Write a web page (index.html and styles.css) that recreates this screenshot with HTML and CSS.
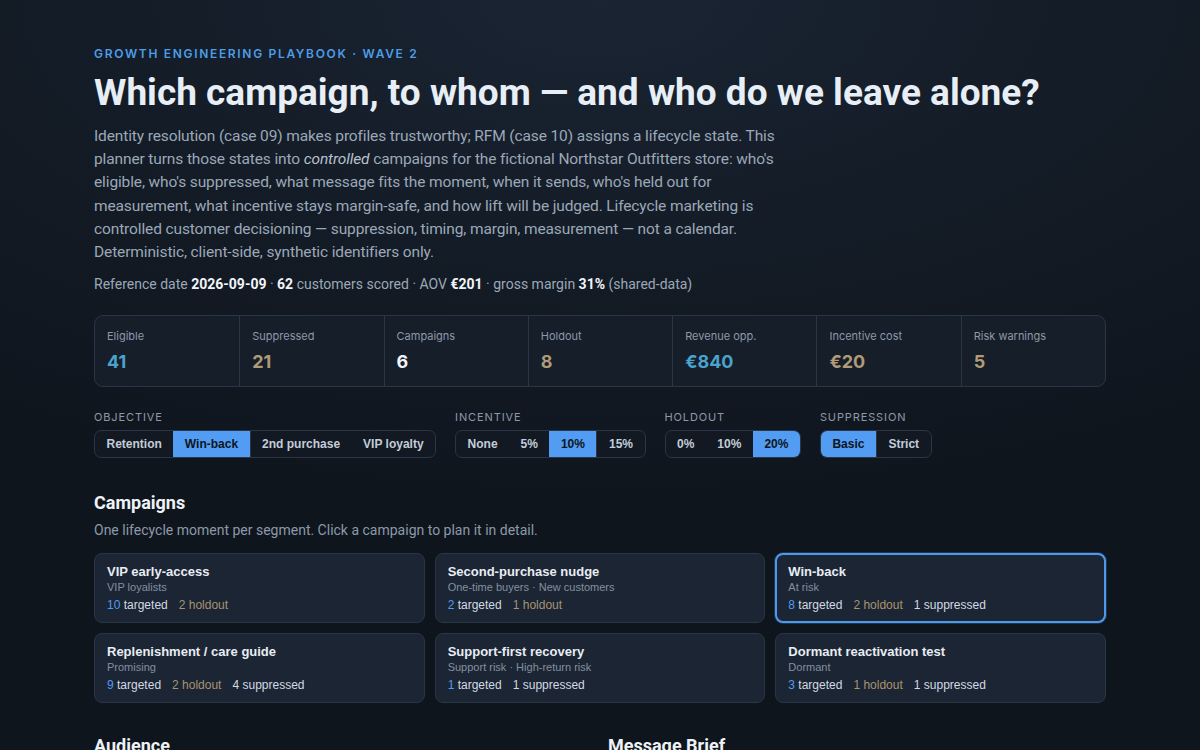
FILE: index.html
```html
<!DOCTYPE html>
<html lang="en">
<head>
<meta charset="utf-8">
<title>Lifecycle Campaign Planner</title>
<link rel="stylesheet" href="styles.css">
</head>
<body>
<main class="page">
  <header class="hero">
    <div class="eyebrow">Growth Engineering Playbook · Wave 2</div>
    <h1 class="title">Which campaign, to whom — and who do we leave alone?</h1>
    <p class="lede">Identity resolution (case 09) makes profiles trustworthy; RFM (case 10) assigns a lifecycle state. This planner turns those states into <em>controlled</em> campaigns for the fictional Northstar Outfitters store: who's eligible, who's suppressed, what message fits the moment, when it sends, who's held out for measurement, what incentive stays margin-safe, and how lift will be judged. Lifecycle marketing is controlled customer decisioning — suppression, timing, margin, measurement — not a calendar. Deterministic, client-side, synthetic identifiers only.</p>
    <p class="meta">Reference date <b>2026-09-09</b> · <b>62</b> customers scored · AOV <b>€201</b> · gross margin <b>31%</b> (shared-data)</p>
  </header>

  <section class="stats">
    <div class="stat"><div class="stat-label">Eligible</div><div class="stat-value teal">41</div></div>
    <div class="stat"><div class="stat-label">Suppressed</div><div class="stat-value tan">21</div></div>
    <div class="stat"><div class="stat-label">Campaigns</div><div class="stat-value">6</div></div>
    <div class="stat"><div class="stat-label">Holdout</div><div class="stat-value tan">8</div></div>
    <div class="stat"><div class="stat-label">Revenue opp.</div><div class="stat-value teal">€840</div></div>
    <div class="stat"><div class="stat-label">Incentive cost</div><div class="stat-value tan">€20</div></div>
    <div class="stat"><div class="stat-label">Risk warnings</div><div class="stat-value tan">5</div></div>
  </section>

  <section class="controls">
    <div class="control">
      <div class="control-label">Objective</div>
      <div class="seg">
        <button class="seg-btn">Retention</button>
        <button class="seg-btn active">Win-back</button>
        <button class="seg-btn">2nd purchase</button>
        <button class="seg-btn">VIP loyalty</button>
      </div>
    </div>
    <div class="control">
      <div class="control-label">Incentive</div>
      <div class="seg">
        <button class="seg-btn">None</button>
        <button class="seg-btn">5%</button>
        <button class="seg-btn active">10%</button>
        <button class="seg-btn">15%</button>
      </div>
    </div>
    <div class="control">
      <div class="control-label">Holdout</div>
      <div class="seg">
        <button class="seg-btn">0%</button>
        <button class="seg-btn">10%</button>
        <button class="seg-btn active">20%</button>
      </div>
    </div>
    <div class="control">
      <div class="control-label">Suppression</div>
      <div class="seg">
        <button class="seg-btn active">Basic</button>
        <button class="seg-btn">Strict</button>
      </div>
    </div>
  </section>

  <section class="campaigns">
    <h2 class="section-title">Campaigns</h2>
    <p class="section-sub">One lifecycle moment per segment. Click a campaign to plan it in detail.</p>
    <div class="card-grid">
      <button class="card">
        <span class="card-title">VIP early-access</span>
        <span class="card-sub">VIP loyalists</span>
        <span class="card-stats"><span><b class="num">10</b> targeted</span><span class="hold">2 holdout</span></span>
      </button>
      <button class="card">
        <span class="card-title">Second-purchase nudge</span>
        <span class="card-sub">One-time buyers · New customers</span>
        <span class="card-stats"><span><b class="num">2</b> targeted</span><span class="hold">1 holdout</span></span>
      </button>
      <button class="card selected">
        <span class="card-title">Win-back</span>
        <span class="card-sub">At risk</span>
        <span class="card-stats"><span><b class="num">8</b> targeted</span><span class="hold">2 holdout</span><span>1 suppressed</span></span>
      </button>
      <button class="card">
        <span class="card-title">Replenishment / care guide</span>
        <span class="card-sub">Promising</span>
        <span class="card-stats"><span><b class="num">9</b> targeted</span><span class="hold">2 holdout</span><span>4 suppressed</span></span>
      </button>
      <button class="card">
        <span class="card-title">Support-first recovery</span>
        <span class="card-sub">Support risk · High-return risk</span>
        <span class="card-stats"><span><b class="num">1</b> targeted</span><span>1 suppressed</span></span>
      </button>
      <button class="card">
        <span class="card-title">Dormant reactivation test</span>
        <span class="card-sub">Dormant</span>
        <span class="card-stats"><span><b class="num">3</b> targeted</span><span class="hold">1 holdout</span><span>1 suppressed</span></span>
      </button>
    </div>
  </section>

  <section class="lower">
    <div class="panel"><h2 class="section-title">Audience</h2></div>
    <div class="panel"><h2 class="section-title">Message Brief</h2></div>
  </section>
</main>
</body>
</html>
```

FILE: styles.css
```css
* { box-sizing: border-box; }
html, body { margin: 0; padding: 0; }
body {
  background: radial-gradient(ellipse 1100px 520px at 50% 0%, #1a2433 0%, #141c27 45%, #0f151d 100%);
  background-color: #0f151d;
  color: #e6edf5;
  font-family: Roboto, Inter, "Noto Sans", sans-serif;
  min-height: 750px;
}
.page {
  width: 1012px;
  margin: 0 auto;
  padding-top: 47px;
}
.eyebrow {
  font-family: Inter, Roboto, sans-serif;
  font-size: 12px;
  line-height: 14px;
  font-weight: 600;
  letter-spacing: 0.14em;
  text-transform: uppercase;
  color: #4d9de6;
}
.title {
  margin: 10px 0 0;
  font-size: 37px;
  line-height: 44px;
  font-weight: 700;
  letter-spacing: 0;
  color: #e8eef5;
}
.lede {
  margin: 10px 0 0;
  max-width: 700px;
  font-size: 15.5px;
  line-height: 23.2px;
  letter-spacing: -0.008em;
  color: #9ba8b8;
}
.lede em { font-style: italic; color: #b6c1ce; }
.meta {
  margin: 10px 0 0;
  font-size: 14px;
  line-height: 20px;
  color: #9ba8b8;
}
.meta b { color: #f1f5f9; font-weight: 700; }

.stats {
  margin-top: 21px;
  display: grid;
  grid-template-columns: repeat(7, 1fr);
  border: 1px solid #2a3645;
  border-radius: 9px;
  background: #161e2a;
  overflow: hidden;
}
.stat {
  padding: 12px 12px 12px;
  border-left: 1px solid #2a3645;
}
.stat:first-child { border-left: none; }
.stat-label {
  font-family: Inter, Roboto, sans-serif;
  font-size: 11px;
  line-height: 16px;
  color: #8c99a9;
}
.stat-value {
  font-family: Inter, Roboto, sans-serif;
  margin-top: 6px;
  font-size: 18px;
  line-height: 24px;
  font-weight: 700;
  color: #f1f5f9;
}
.teal { color: #4aa3cc; }
.tan { color: #b09a78; }

.controls {
  margin-top: 23px;
  display: flex;
  gap: 19px;
}
.control-label {
  font-family: Inter, Roboto, sans-serif;
  font-size: 11px;
  line-height: 14px;
  letter-spacing: 0.08em;
  text-transform: uppercase;
  color: #8c99a9;
}
.seg {
  margin-top: 6px;
  display: flex;
  border: 1px solid #2a3645;
  border-radius: 7px;
  overflow: hidden;
  background: #121923;
}
.seg-btn {
  border: none;
  background: transparent;
  color: #c3cdd9;
  font-family: "Liberation Sans", Arial, sans-serif;
  font-size: 12px;
  font-weight: 700;
  height: 26px;
  padding: 0 11.5px;
  cursor: pointer;
}
.seg-btn.active {
  background: #529cf3;
  color: #0d1520;
}
.seg-btn.active + .seg-btn { border-left: 1px solid #2a3645; }

.campaigns { margin-top: 33px; }
.section-title {
  margin: 0;
  font-size: 18px;
  line-height: 24px;
  font-weight: 700;
  color: #eef2f7;
}
.section-sub {
  margin: 5px 0 0;
  font-size: 14px;
  line-height: 20px;
  color: #8c99a9;
}
.card-grid {
  margin-top: 13px;
  display: grid;
  grid-template-columns: repeat(3, 1fr);
  gap: 10px;
}
.card {
  display: flex;
  flex-direction: column;
  align-items: flex-start;
  text-align: left;
  height: 70px;
  padding: 9px 12px 8px;
  background: #1b2533;
  border: 1px solid #2a3645;
  border-radius: 8px;
  font-family: "Liberation Sans", Arial, sans-serif;
  color: #d6dde6;
  cursor: pointer;
}
.card.selected {
  border: 2px solid #4f99ec;
  padding: 8px 11px 7px;
  box-shadow: 0 0 0 1px rgba(79, 153, 236, 0.25);
}
.card-title {
  font-size: 13px;
  line-height: 17px;
  font-weight: 700;
  color: #e8edf3;
}
.card-sub {
  font-size: 11px;
  line-height: 14px;
  color: #8390a0;
}
.card-stats {
  margin-top: 4px;
  display: flex;
  gap: 11px;
  font-size: 12px;
  line-height: 15px;
  color: #d3dae3;
}
.card-stats .num { font-weight: 400; color: #4f9cf2; }
.card-stats .hold { color: #a8946f; }

.lower {
  margin-top: 31px;
  display: grid;
  grid-template-columns: 1fr 1fr;
  gap: 16px;
}
```
